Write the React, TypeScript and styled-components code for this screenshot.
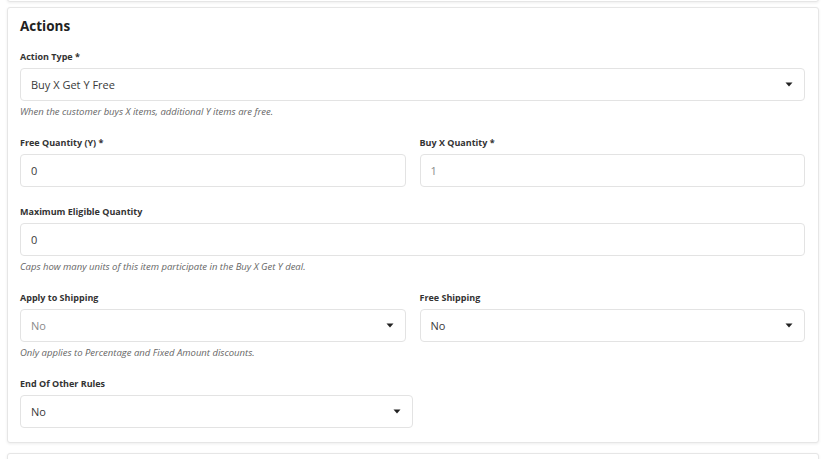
import React from 'react';
import styled, { createGlobalStyle } from 'styled-components';

const GlobalStyle = createGlobalStyle`
  html, body {
    margin: 0;
    padding: 0;
    background: #ffffff;
  }
  body {
    font-family: "Open Sans", "Noto Sans", sans-serif;
    color: #333;
    overflow: hidden;
  }
`;

const Page = styled.div`
  display: flex;
  flex-direction: column;
  gap: 5px;
  padding: 0 14px 0 7px;
`;

const Card = styled.div<{ $stub?: boolean; $next?: boolean }>`
  background: #fff;
  border: 1px solid #e6e6e6;
  border-radius: 3px;
  box-shadow: 0 1px 3px rgba(0, 0, 0, 0.07);
  padding: 8px 13px 14px 12px;
  ${(p) => (p.$stub ? 'height: 40px; margin-top: -40px; padding: 0;' : '')}
  ${(p) => (p.$next ? 'height: 40px; margin-top: 5px; padding: 0;' : '')}
`;

const Title = styled.h2`
  margin: 0 0 14px;
  font-size: 13.5px;
  line-height: 20px;
  font-weight: 700;
  color: #222;
`;

const Row = styled.div<{ $cols?: number }>`
  display: grid;
  grid-template-columns: ${(p) => (p.$cols === 2 ? '1fr 1fr' : '1fr')};
  column-gap: 14px;
`;

const Field = styled.div<{ $half?: boolean; $last?: boolean }>`
  margin-bottom: ${(p) => (p.$last ? '0' : '18px')};
  width: ${(p) => (p.$half ? '50%' : 'auto')};
`;

const Label = styled.label`
  display: block;
  font-size: 9px;
  line-height: 14px;
  font-weight: 700;
  color: #333;
  margin-bottom: 4px;
`;

const Control = styled.div<{ $muted?: boolean }>`
  display: flex;
  align-items: center;
  justify-content: space-between;
  height: 31px;
  border: 1px solid #e3e3e3;
  border-radius: 4px;
  padding: 0 11px 0 10px;
  font-size: 11px;
  color: ${(p) => (p.$muted ? '#8a8a8a' : '#3a3a3a')};
  background: #fff;
`;

const Help = styled.div`
  margin-top: 4px;
  font-size: 9.5px;
  line-height: 13px;
  font-style: italic;
  color: #666;
`;

const Caret = () => (
  <svg width="8" height="5" viewBox="0 0 8 5">
    <path d="M0.5 0.5 L7.5 0.5 L4 4.5 Z" fill="#222" />
  </svg>
);

function App() {
  return (
    <>
      <GlobalStyle />
      <Page>
        <Card $stub />
        <Card>
          <Title>Actions</Title>

          <Field>
            <Label>Action Type *</Label>
            <Control>
              <span>Buy X Get Y Free</span>
              <Caret />
            </Control>
            <Help>When the customer buys X items, additional Y items are free.</Help>
          </Field>

          <Row $cols={2}>
            <Field>
              <Label>Free Quantity (Y) *</Label>
              <Control>0</Control>
            </Field>
            <Field>
              <Label>Buy X Quantity *</Label>
              <Control $muted>1</Control>
            </Field>
          </Row>

          <Field>
            <Label>Maximum Eligible Quantity</Label>
            <Control>0</Control>
            <Help>Caps how many units of this item participate in the Buy X Get Y deal.</Help>
          </Field>

          <Row $cols={2}>
            <Field>
              <Label>Apply to Shipping</Label>
              <Control $muted>
                <span>No</span>
                <Caret />
              </Control>
              <Help>Only applies to Percentage and Fixed Amount discounts.</Help>
            </Field>
            <Field>
              <Label>Free Shipping</Label>
              <Control>
                <span>No</span>
                <Caret />
              </Control>
            </Field>
          </Row>

          <Field $half $last>
            <Label>End Of Other Rules</Label>
            <Control>
              <span>No</span>
              <Caret />
            </Control>
          </Field>
        </Card>
        <Card $next />
      </Page>
    </>
  );
}

export default App;
